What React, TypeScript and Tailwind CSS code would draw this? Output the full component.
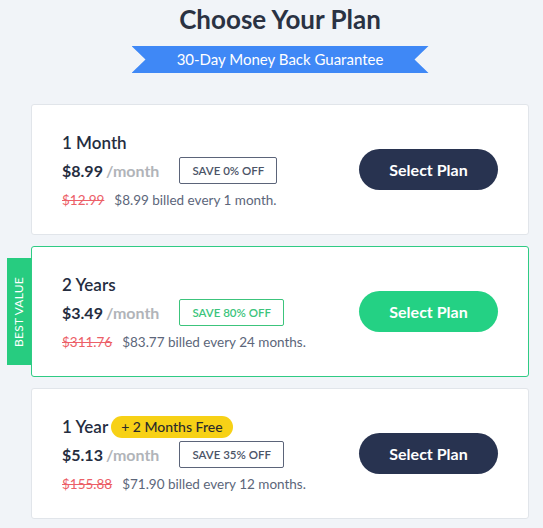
const plans = [
    {
        title: '1 Month',
        price: '$8.99',
        save: 'SAVE 0% OFF',
        old: '$12.99',
        billed: '$8.99 billed every 1 month.',
        featured: false,
        extra: null as string | null,
    },
    {
        title: '2 Years',
        price: '$3.49',
        save: 'SAVE 80% OFF',
        old: '$311.76',
        billed: '$83.77 billed every 24 months.',
        featured: true,
        extra: null as string | null,
    },
    {
        title: '1 Year',
        price: '$5.13',
        save: 'SAVE 35% OFF',
        old: '$155.88',
        billed: '$71.90 billed every 12 months.',
        featured: false,
        extra: '+ 2 Months Free',
    },
];

export default function App() {
    return (
        <div className="min-h-[528px] w-[543px] bg-[#f1f4f8] font-['Lato','Noto_Sans',sans-serif] text-[#27314b]">
            <div className="flex flex-col items-center w-[560px]">
                <h1 className="mt-[3px] text-[26px] font-bold leading-[32px] text-[#2a3243]">Choose Your Plan</h1>
                <div className="mt-[11px] flex h-[27px] w-[297px] items-center justify-center bg-[#3f88f6] text-[15px] text-white [clip-path:polygon(0_0,100%_0,calc(100%-14px)_50%,100%_100%,0_100%,14px_50%)]">
                    30-Day Money Back Guarantee
                </div>
            </div>

            <div className="ml-[31px] mt-[31px] flex w-[498px] flex-col gap-[11px]">
                {plans.map(plan => (
                    <div
                        key={plan.title}
                        className={`relative flex h-[131px] items-center justify-between rounded-[3px] border bg-white px-[30px] ${plan.featured ? 'border-[#2fcb84]' : 'border-[#e1e5ea]'}`}
                    >
                        {plan.featured && (
                            <div className="absolute left-[-25px] top-[11px] flex h-[107px] w-[24px] items-center justify-center bg-[#27cc80]">
                                <span className="-rotate-90 whitespace-nowrap text-[12px] tracking-[0.2px] text-white">BEST VALUE</span>
                            </div>
                        )}

                        <div className="flex flex-col pt-[2px]">
                            <div className="flex items-center gap-[3px]">
                                <span className="text-[17px] font-semibold leading-[24px] text-[#252d3f]">{plan.title}</span>
                                {plan.extra && (
                                    <span className="rounded-full bg-[#f7d116] px-[10px] text-[14px] font-medium leading-[22px] text-[#2b2b2b]">
                                        {plan.extra}
                                    </span>
                                )}
                            </div>
                            <div className="mt-[2px] flex items-center">
                                <span className="text-[16px] font-bold text-[#252d3f]">{plan.price}</span>
                                <span className="ml-[3px] text-[16px] font-bold text-[#b1b4b9]">/month</span>
                                <span
                                    className={`ml-[20px] flex h-[27px] items-center rounded-[2px] border px-[12px] text-[11.5px] font-semibold ${plan.featured ? 'border-[#3cc47c] text-[#3cc47c]' : 'border-[#5b6479] text-[#4b5467]'}`}
                                >
                                    {plan.save}
                                </span>
                            </div>
                            <div className="mt-[6px] flex items-center text-[13.5px] leading-[20px]">
                                <span className="text-[#ec6068] line-through">{plan.old}</span>
                                <span className="ml-[10px] text-[#5c667a]">{plan.billed}</span>
                            </div>
                        </div>

                        <button
                            className={`h-[41px] w-[139px] rounded-full text-[16px] font-bold text-white ${plan.featured ? 'bg-[#24d184]' : 'bg-[#283350]'}`}
                        >
                            Select Plan
                        </button>
                    </div>
                ))}
            </div>
        </div>
    );
}
